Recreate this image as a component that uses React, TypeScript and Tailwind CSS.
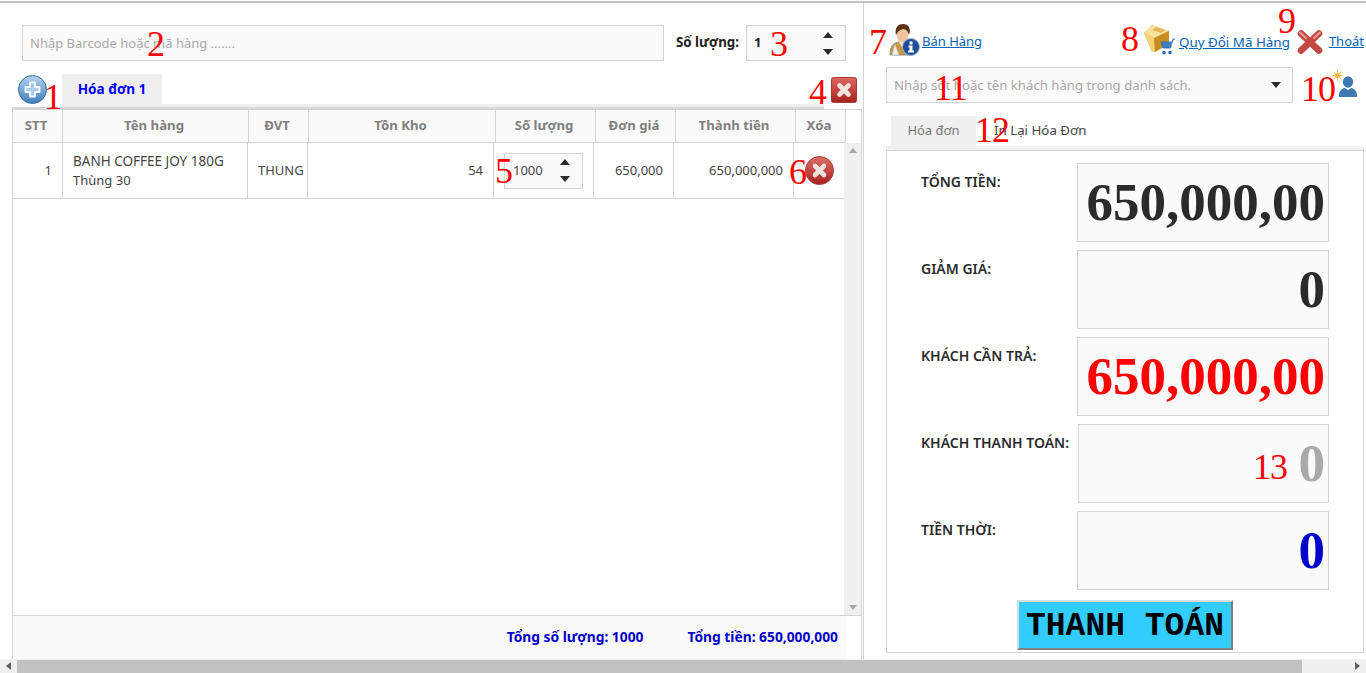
import type { ReactNode } from "react"

const cols = [50, 186, 60, 187, 100, 80, 120, 50]

function Mark({ x, y, children }: { x: number; y: number; children: ReactNode }) {
  return (
    <span
      className="absolute text-[36px] leading-none tracking-[-1px] text-[#ff0000] font-['Liberation_Serif',serif]"
      style={{ left: x, top: y }}
    >
      {children}
    </span>
  )
}

function Caret({ up, className }: { up?: boolean; className?: string }) {
  return (
    <svg width="10" height="6" viewBox="0 0 10 6" className={className}>
      <polygon points={up ? "5,0 10,6 0,6" : "0,0 10,0 5,6"} fill="#2b2b2b" />
    </svg>
  )
}

function Spinner() {
  return (
    <span className="flex flex-col gap-[11px]">
      <Caret up />
      <Caret />
    </span>
  )
}

function AddIcon() {
  return (
    <svg width="29" height="29" viewBox="0 0 29 29">
      <defs>
        <linearGradient id="add" x1="0" y1="0" x2="0" y2="1">
          <stop offset="0" stopColor="#b5d4ee" />
          <stop offset="1" stopColor="#3f7fbb" />
        </linearGradient>
      </defs>
      <circle cx="14.5" cy="14.5" r="14" fill="url(#add)" stroke="#3a6f9f" />
      <path d="M12 7.5h5v4.500h4.500v5H17v4.500h-5V17H7.500v-5H12z" fill="#a9cbe8" stroke="#fff" strokeWidth="1.8" strokeLinejoin="round" />
    </svg>
  )
}

function CloseBox() {
  return (
    <svg width="26" height="26" viewBox="0 0 26 26">
      <defs>
        <linearGradient id="cb" x1="0" y1="0" x2="0" y2="1">
          <stop offset="0" stopColor="#dc6a60" />
          <stop offset="1" stopColor="#a8201c" />
        </linearGradient>
      </defs>
      <rect x="0.5" y="0.5" width="25" height="25" rx="2" fill="url(#cb)" stroke="#a63a34" />
      <path d="M8.500 8.500l9 9M17.500 8.500l-9 9" stroke="#efe4e2" strokeWidth="4.6" strokeLinecap="round" />
    </svg>
  )
}

function CloseRound() {
  return (
    <svg width="29" height="29" viewBox="0 0 29 29">
      <defs>
        <linearGradient id="cr" x1="0" y1="0" x2="0" y2="1">
          <stop offset="0" stopColor="#e0716a" />
          <stop offset="1" stopColor="#a5201c" />
        </linearGradient>
      </defs>
      <circle cx="14.5" cy="14.5" r="14" fill="url(#cr)" stroke="#a63a34" />
      <path d="M10 10l9 9M19 10l-9 9" stroke="#efe4e2" strokeWidth="4.6" strokeLinecap="round" />
    </svg>
  )
}

function SellerIcon() {
  return (
    <svg width="31" height="32" viewBox="0 0 31 32">
      <path d="M1 31c0-8 3-13 10-13h3c6 0 9 5 9 13z" fill="#c9993f" stroke="#8d8d8d" />
      <path d="M3 31l3-11 4 11z" fill="#f3efe6" stroke="#b9b9b9" strokeWidth="0.6" />
      <path d="M10 18l3.500 6 4-6z" fill="#f4e8d8" />
      <ellipse cx="13.500" cy="10.500" rx="6" ry="8" fill="#eec4a0" />
      <path d="M7 11C5 3 10 0 14 0s9 3 6 11c-1-4-3-6-6-6-3 1-5 2-7 6z" fill="#5b3216" />
      <circle cx="22" cy="23" r="8.500" fill="#1e4f96" stroke="#9db7d8" />
      <rect x="20.500" y="17.500" width="3" height="3" fill="#fff" />
      <path d="M19.500 21.500h4v5H25v2h-6v-2h1.500v-3h-1z" fill="#fff" />
    </svg>
  )
}

function BoxCartIcon() {
  return (
    <svg width="31" height="30" viewBox="0 0 31 30">
      <path d="M0 8l8 19 17-8V6L8 0z" fill="#e9b84a" />
      <path d="M0 7l10 6 15-7L9 0z" fill="#f8e2a0" />
      <path d="M0 7l10 6 1 14-3 0z" fill="#f5d272" />
      <path d="M10 13l15-7v13L11 27z" fill="#c98e22" />
      <path d="M12 2l9 3-4 3-9-3z" fill="#e4b552" />
      <path d="M17 17h11l-1.500 6H19z" fill="#3f7fc4" stroke="#2a6bb0" strokeWidth="0.8" />
      <path d="M28 17l1.500-3H31" stroke="#2a6bb0" strokeWidth="1.2" fill="none" />
      <circle cx="20" cy="27.500" r="1.800" fill="#2a6bb0" />
      <circle cx="26" cy="27.500" r="1.800" fill="#2a6bb0" />
    </svg>
  )
}

function ExitIcon() {
  return (
    <svg width="28" height="26" viewBox="0 0 28 26">
      <path d="M5 4.500l18 17M23 4.500l-18 17" stroke="#c24a43" strokeWidth="6.600" strokeLinecap="round" />
      <path d="M4 3.500l6 5.500M24 3.500l-6 5.500" stroke="#ee9f97" strokeWidth="2" strokeLinecap="round" />
    </svg>
  )
}

function NewCustomerIcon() {
  return (
    <svg width="26" height="28" viewBox="0 0 26 28">
      <circle cx="5.500" cy="5.500" r="2.600" fill="#f3c766" />
      <path d="M5.500 0v11M0 5.500h11M1.500 1.500l8 8M9.500 1.500l-8 8" stroke="#f0b545" strokeWidth="0.9" />
      <ellipse cx="16" cy="12" rx="5.200" ry="5.800" fill="#3f78b3" />
      <path d="M7 27c-.5-5 2-8.500 6-9l3 2 3-2c4 .5 6.500 4 6 9z" fill="#3f78b3" />
    </svg>
  )
}

function AmountBox({ label, value, color, shift }: { label: string; value: string; color: string; shift?: boolean }) {
  return (
    <div className="flex h-[79px] mb-[8px]">
      <div className="w-[190px] pl-[34px] pt-[8px] text-[14px] font-semibold text-[#2b2b2b] whitespace-nowrap">
        {label}
      </div>
      <div
        className={`border border-[#d3d3d3] bg-[#fafafa] flex items-center justify-end pr-[3px] overflow-hidden text-[53px] leading-none font-bold font-['Liberation_Serif',serif] ${shift ? "ml-px w-[251px]" : "w-[252px]"}`}
        style={{ color }}
      >
        {value}
      </div>
    </div>
  )
}

export default function App() {
  return (
    <div className="relative w-[1366px] h-[673px] overflow-hidden bg-white text-[13px] text-[#333] font-['Noto_Sans','Open_Sans',sans-serif]">
      {/* top rule */}
      <div className="h-[3px] border-b-2 border-[#c4c4c4]" />

      <div className="flex h-[656px]">
        {/* ── left: invoice ── */}
        <div className="w-[864px] border-r border-[#d3d3d3] flex flex-col">
          <div className="flex items-center h-[36px] mt-[22px] ml-[22px]">
            <div className="w-[642px] h-full border border-[#d3d3d3] bg-[#fafafa] px-[7px] pt-[2px] flex items-center text-[#a9a9a9]">
              Nhập Barcode hoặc mã hàng .......
            </div>
            <span className="ml-[12px] text-[13.300px] font-bold text-[#222] whitespace-nowrap">Số lượng:</span>
            <div className="ml-auto w-[100px] h-full border border-[#d3d3d3] bg-[#fafafa] flex items-center justify-between pl-[7px] pr-[12px] mr-[17px]">
              <span className="font-bold text-[#222]">1</span>
              <Spinner />
            </div>
          </div>

          {/* invoice tabs */}
          <div className="flex items-end h-[30px] mt-[13px] pl-[18px] pr-[6px]">
            <div className="mr-[15px] flex"><AddIcon /></div>
            <div className="w-[100px] h-[30px] bg-[#f0f0f0] flex items-center justify-center text-[13.600px] font-bold text-[#0000ff]">
              Hóa đơn 1
            </div>
            <div className="ml-auto mb-[1px] flex"><CloseBox /></div>
          </div>
          <div className="h-[3px] ml-[62px] w-[762px] bg-[#efefef]" />
          <div className="h-[2px] ml-[12px] w-[812px] bg-[#d8d8d8]" />

          {/* table */}
          <div className="ml-[12px] flex-1 border-t border-l border-r border-[#d3d3d3] mr-[1px] flex flex-col min-h-0">
            <div className="flex h-[33px] bg-[#fafafa] border-b border-[#d3d3d3] w-[833px]">
              {["STT", "Tên hàng", "ĐVT", "Tồn Kho", "Số lượng", "Đơn giá", "Thành tiền", "Xóa"].map((h, i) => (
                <div
                  key={h}
                  className="border-r border-[#d3d3d3] flex items-center justify-center pr-[3px] text-[13.200px] font-bold text-[#808080]"
                  style={{ width: cols[i] }}
                >
                  {h}
                </div>
              ))}
            </div>

            <div className="flex-1 flex min-h-0">
              <div className="w-[831px]">
                <div className="flex h-[56px] border-b border-[#d3d3d3] text-[#444]">
                  <div className="w-[50px] border-r border-[#d3d3d3] flex items-center justify-end pr-[10px]">1</div>
                  <div className="w-[185px] border-r border-[#d3d3d3] pl-[10px] flex flex-col justify-center leading-[19px] whitespace-nowrap">
                    <span className="text-[13.500px]">BANH COFFEE JOY 180G</span>
                    <span>Thùng 30</span>
                  </div>
                  <div className="w-[60px] border-r border-[#d3d3d3] flex items-center pl-[10px]">THUNG</div>
                  <div className="w-[186px] border-r border-[#d3d3d3] flex items-center justify-end pr-[10px]">54</div>
                  <div className="w-[100px] border-r border-[#d3d3d3] flex items-center pl-[10px]">
                    <div className="w-[79px] h-[36px] border border-[#d3d3d3] bg-[#fafafa] flex items-center justify-between pl-[8px] pr-[12px]">
                      <span>1000</span>
                      <Spinner />
                    </div>
                  </div>
                  <div className="w-[80px] border-r border-[#d3d3d3] flex items-center justify-end pr-[10px]">650,000</div>
                  <div className="w-[120px] border-r border-[#d3d3d3] flex items-center justify-end pr-[10px]">650,000,000</div>
                  <div className="w-[50px] flex items-center justify-center"><CloseRound /></div>
                </div>
              </div>
              {/* vertical scrollbar */}
              <div className="w-[18px] bg-[#f0f0f0] flex flex-col justify-between items-center py-[5px]">
                <svg width="8" height="5" viewBox="0 0 8 5"><polygon points="4,0 8,5 0,5" fill="#a6a6a6" /></svg>
                <svg width="8" height="5" viewBox="0 0 8 5"><polygon points="0,0 8,0 4,5" fill="#a6a6a6" /></svg>
              </div>
            </div>

            <div className="h-[44px] border-t border-[#d3d3d3] w-full">
              <div className="w-[833px] h-full bg-[#fafafa] flex items-center justify-end gap-[44px] pr-[8px] text-[13.800px] font-bold text-[#0000cc]">
                <span>Tổng số lượng: 1000</span>
                <span>Tổng tiền: 650,000,000</span>
              </div>
            </div>
          </div>
        </div>

        {/* ── right: payment ── */}
        <div className="flex-1 flex flex-col pl-[22px] pr-[2px]">
          <div className="flex items-center h-[32px] mt-[21px]">
            <div className="ml-[3px] flex"><SellerIcon /></div>
            <a className="ml-[2px] mt-[4px] text-[#0563b8] underline whitespace-nowrap">Bán Hàng</a>
            <div className="ml-auto flex"><BoxCartIcon /></div>
            <a className="ml-[4px] mt-[4px] text-[13.400px] text-[#0563b8] underline whitespace-nowrap">Quy Đổi Mã Hàng</a>
            <div className="ml-[6px] mt-[3px] flex"><ExitIcon /></div>
            <a className="ml-[5px] mt-[4px] text-[#0563b8] underline whitespace-nowrap">Thoát</a>
          </div>

          <div className="flex items-center mt-[11px]">
            <div className="w-[407px] h-[36px] border border-[#d3d3d3] bg-[#fafafa] pl-[7px] pr-[11px] flex items-center justify-between text-[13.200px] text-[#a9a9a9]">
              <span className="pt-[2px]">Nhập sđt hoặc tên khách hàng trong danh sách.</span>
              <Caret />
            </div>
            <div className="ml-[39px] mt-[-3px] flex"><NewCustomerIcon /></div>
          </div>

          <div className="flex h-[30px] mt-[13px] pl-[5px]">
            <div className="w-[85px] bg-[#f0f0f0] flex items-center justify-center text-[#777]">Hóa đơn</div>
            <div className="pl-[18px] flex items-center text-[13.300px] text-[#444]">In Lại Hóa Đơn</div>
          </div>
          <div className="h-[4px] bg-[#f0f0f0]" />

          <div className="h-[503px] border border-[#d3d3d3] pt-[12px] flex flex-col">
            <AmountBox label="TỔNG TIỀN:" value="650,000,00" color="#2b2b2b" />
            <AmountBox label="GIẢM GIÁ:" value="0" color="#2b2b2b" />
            <AmountBox label="KHÁCH CẦN TRẢ:" value="650,000,00" color="#ff0000" />
            <AmountBox label="KHÁCH THANH TOÁN:" value="0" color="#a9a9a9" shift />
            <AmountBox label="TIỀN THỜI:" value="0" color="#0000cc" />
            <button className="self-start ml-[130px] mt-[2px] w-[216px] h-[50px] pt-[2px] bg-[#33ccff] border-2 border-t-[#dcdcdc] border-l-[#dcdcdc] border-r-[#808080] border-b-[#808080] text-[33px] leading-none font-bold text-black whitespace-pre font-['Liberation_Mono',monospace]">
              THANH TOÁN
            </button>
          </div>
        </div>
      </div>

      {/* horizontal scrollbar */}
      <div className="h-[14px] bg-[#f0f0f0] flex items-center">
        <div className="w-[17px] flex justify-center">
          <svg width="5" height="8" viewBox="0 0 5 8"><polygon points="5,0 5,8 0,4" fill="#606060" /></svg>
        </div>
        <div className="w-[1285px] h-[13px] self-end bg-[#c1c1c1]" />
        <div className="ml-auto w-[17px] flex justify-center">
          <svg width="5" height="8" viewBox="0 0 5 8"><polygon points="0,0 0,8 5,4" fill="#606060" /></svg>
        </div>
      </div>

      {/* red annotation numbers over the page */}
      <Mark x={44} y={79}>1</Mark>
      <Mark x={147} y={26}>2</Mark>
      <Mark x={770} y={26}>3</Mark>
      <Mark x={809} y={74}>4</Mark>
      <Mark x={495} y={153}>5</Mark>
      <Mark x={789} y={154}>6</Mark>
      <Mark x={869} y={24}>7</Mark>
      <Mark x={1121} y={21}>8</Mark>
      <Mark x={1278} y={3}>9</Mark>
      <Mark x={1301} y={71}>10</Mark>
      <Mark x={934} y={70}>11</Mark>
      <Mark x={975} y={112}>12</Mark>
      <Mark x={1253} y={449}>13</Mark>
    </div>
  )
}
